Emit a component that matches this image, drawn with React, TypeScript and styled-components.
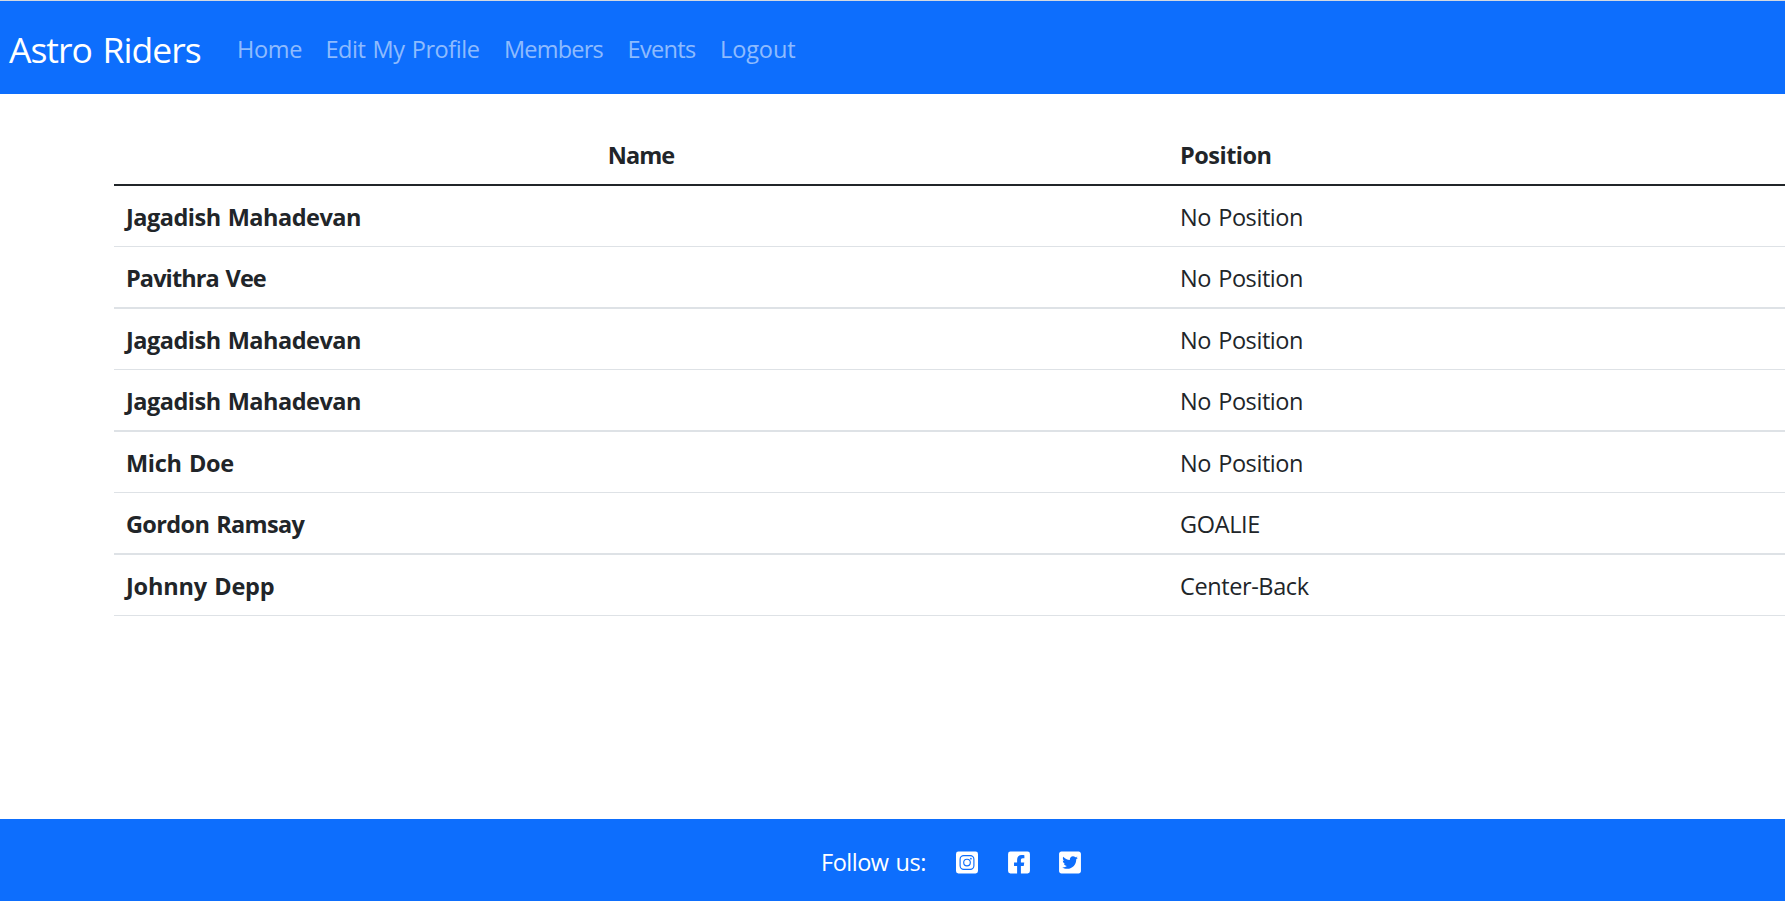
import React from "react";
import styled, { createGlobalStyle } from "styled-components";
import { FaFacebookSquare, FaTwitterSquare } from "react-icons/fa";

const GlobalStyle = createGlobalStyle`
  *, *::before, *::after { box-sizing: border-box; }
  body {
    margin: 0;
    overflow: hidden;
    background: #fff;
    color: #212529;
    font-family: "Open Sans", "Noto Sans", sans-serif;
    font-size: 23.5px;
    line-height: 36px;
    word-spacing: 1.5px;
  }
`;

const Page = styled.div`
  display: flex;
  flex-direction: column;
  width: 100%;
  height: 901px;
  border-top: 1px solid #d3d9e1;
`;

const Navbar = styled.nav`
  display: flex;
  align-items: center;
  flex: none;
  height: 93px;
  padding: 2px 0 0 9px;
  background: #0d6efd;
`;

const Brand = styled.a`
  width: 228px;
  color: #fff;
  font-size: 35.5px;
  letter-spacing: -1px;
  word-spacing: 2.5px;
  line-height: 54px;
  white-space: nowrap;
`;

const NavList = styled.ul`
  display: flex;
  margin: 0;
  padding: 0;
  list-style: none;
`;

const NavItem = styled.li<{ $width: number; $tracking: number }>`
  width: ${({ $width }) => $width}px;
  color: rgba(255, 255, 255, 0.55);
  letter-spacing: ${({ $tracking }) => $tracking}px;
  white-space: nowrap;
`;

const Main = styled.main`
  flex: 1;
  padding: 31px 0 0 114px;
`;

const Cell = styled.div<{ $tracking: number; $bold?: boolean; $center?: boolean }>`
  padding: 13px 12px 0;
  font-weight: ${({ $bold }) => ($bold ? 700 : 400)};
  letter-spacing: ${({ $tracking }) => $tracking}px;
  text-align: ${({ $center }) => ($center ? "center" : "left")};
  white-space: nowrap;
`;

const Row = styled.div<{ $height: number; $line: number }>`
  display: grid;
  grid-template-columns: 1054px 1fr;
  height: ${({ $height }) => $height}px;
  border-bottom: ${({ $line }) => $line}px solid #dee2e6;
`;

const HeadRow = styled(Row)`
  border-color: #212529;

  ${Cell} {
    padding-top: 12px;
  }
`;

const Footer = styled.footer`
  display: flex;
  align-items: center;
  flex: none;
  height: 82px;
  padding: 4px 0 0 821px;
  background: #0d6efd;
  color: #fff;
`;

const FollowLabel = styled.span`
  width: 135px;
  letter-spacing: -0.5px;
`;

const SocialLinks = styled.div`
  display: flex;
  align-items: center;
  gap: 29.5px;
  font-size: 25px;
`;

const SocialLink = styled.a`
  display: flex;
  width: 22px;
  justify-content: center;
`;

function InstagramIcon() {
  return (
    <svg width="22" height="25" viewBox="0 0 22 25" fill="none">
      <rect y="1.5" width="22" height="22" rx="2.4" fill="#fff" />
      <rect x="4.1" y="5.6" width="13.8" height="13.8" rx="3.6" stroke="#0d6efd" strokeWidth="1.15" />
      <circle cx="11" cy="12.5" r="3.3" stroke="#0d6efd" strokeWidth="1.15" />
      <circle cx="14.9" cy="8.7" r="0.85" fill="#0d6efd" />
    </svg>
  );
}

const links = [
  { label: "Home", width: 88.5, tracking: -0.3 },
  { label: "Edit My Profile", width: 178.5, tracking: -0.45 },
  { label: "Members", width: 123.5, tracking: -0.8 },
  { label: "Events", width: 92.5, tracking: -0.65 },
  { label: "Logout", width: 80, tracking: -0.1 },
];

const members = [
  { name: "Jagadish Mahadevan", nameTracking: -0.5, position: "No Position", tracking: -0.42, height: 61, line: 1 },
  { name: "Pavithra Vee", nameTracking: -0.9, position: "No Position", tracking: -0.42, height: 62, line: 2 },
  { name: "Jagadish Mahadevan", nameTracking: -0.5, position: "No Position", tracking: -0.42, height: 61, line: 1 },
  { name: "Jagadish Mahadevan", nameTracking: -0.5, position: "No Position", tracking: -0.42, height: 62, line: 2 },
  { name: "Mich Doe", nameTracking: -0.3, position: "No Position", tracking: -0.42, height: 61, line: 1 },
  { name: "Gordon Ramsay", nameTracking: -0.65, position: "GOALIE", tracking: -0.35, height: 62, line: 2 },
  { name: "Johnny Depp", nameTracking: -0.2, position: "Center-Back", tracking: -0.4, height: 61, line: 1 },
];

export default function App() {
  return (
    <>
      <GlobalStyle />
      <Page>
        <Navbar>
          <Brand>Astro Riders</Brand>
          <NavList>
            {links.map((link) => (
              <NavItem key={link.label} $width={link.width} $tracking={link.tracking}>
                {link.label}
              </NavItem>
            ))}
          </NavList>
        </Navbar>
        <Main>
          <HeadRow $height={61} $line={2}>
            <Cell $bold $center $tracking={-0.95}>Name</Cell>
            <Cell $bold $tracking={-0.5}>Position</Cell>
          </HeadRow>
          {members.map((member, index) => (
            <Row key={index} $height={member.height} $line={member.line}>
              <Cell $bold $tracking={member.nameTracking}>{member.name}</Cell>
              <Cell $tracking={member.tracking}>{member.position}</Cell>
            </Row>
          ))}
        </Main>
        <Footer>
          <FollowLabel>Follow us:</FollowLabel>
          <SocialLinks>
            <SocialLink aria-label="Instagram"><InstagramIcon /></SocialLink>
            <SocialLink aria-label="Facebook"><FaFacebookSquare /></SocialLink>
            <SocialLink aria-label="Twitter"><FaTwitterSquare /></SocialLink>
          </SocialLinks>
        </Footer>
      </Page>
    </>
  );
}
